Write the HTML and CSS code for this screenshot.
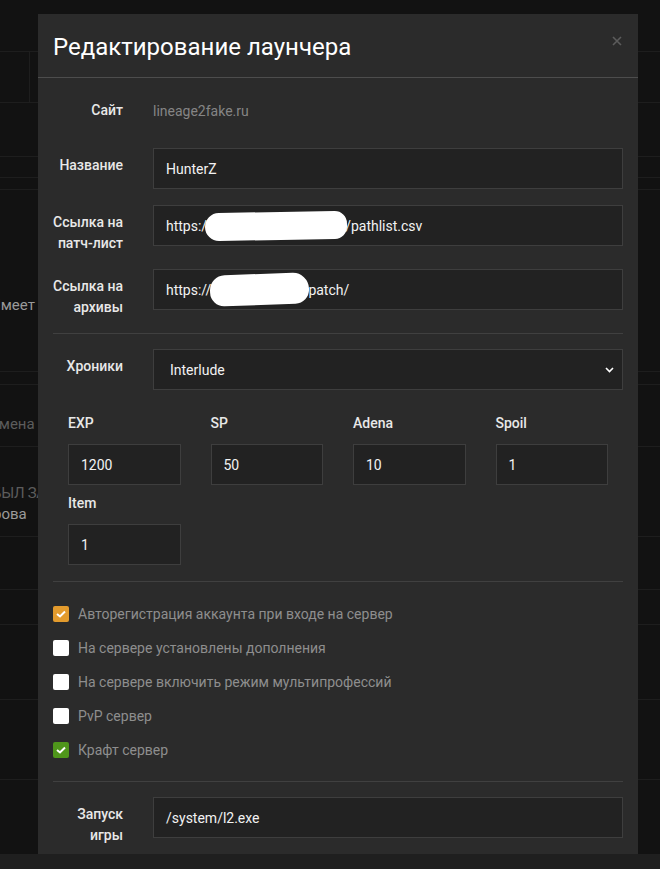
FILE: index.html
```html
<!DOCTYPE html>
<html lang="ru">
<head>
<meta charset="utf-8">
<title>Редактирование лаунчера</title>
<link rel="stylesheet" href="styles.css">
</head>
<body>
<div class="page">
  <div class="prow h52"></div>
  <div class="prow h51"><span class="vsep"></span></div>
  <div class="prow h54"></div>
  <div class="prow h21"></div>
  <div class="prow h12"></div>
  <div class="prow h182"><span class="ptext t1">Имеет</span></div>
  <div class="prow h13"></div>
  <div class="prow h62"><span class="ptext t2">Смена</span></div>
  <div class="prow h90"><span class="ptext t3">БЫЛ ЗА</span><span class="ptext t4">Активирова</span></div>
  <div class="prow h53"></div>
  <div class="prow h35"></div>
  <div class="prow h75"></div>
  <div class="prow h80"></div>
</div>

<div class="overlay">
  <div class="modal">
    <div class="modal-header">
      <h4 class="modal-title">Редактирование лаунчера</h4>
      <span class="close"><svg width="10" height="10" viewBox="0 0 10 10"><path d="M1 1L9 9M9 1L1 9" stroke="#5c5c5c" stroke-width="1.6" fill="none"/></svg></span>
    </div>
    <div class="modal-body">
      <div class="frow static-row">
        <div class="flabel">Сайт</div>
        <div class="static-value">lineage2fake.ru</div>
      </div>
      <div class="frow">
        <div class="flabel">Название</div>
        <div class="finput">HunterZ</div>
      </div>
      <div class="frow tall">
        <div class="flabel">Ссылка на<br>патч-лист</div>
        <div class="finput">https:/<span class="blot blot1"></span>/pathlist.csv</div>
      </div>
      <div class="frow tall">
        <div class="flabel">Ссылка на<br>архивы</div>
        <div class="finput">https://<span class="blot blot2"></span>patch/</div>
      </div>
      <div class="sep"></div>
      <div class="frow select-row">
        <div class="flabel">Хроники</div>
        <div class="finput fselect"><span>Interlude</span>
          <svg class="chev" width="9" height="6" viewBox="0 0 9 6"><path d="M1 1L4.5 4.5L8 1" stroke="#ffffff" stroke-width="1.6" fill="none"/></svg>
        </div>
      </div>
      <div class="rates">
        <div class="rate"><div class="rlabel">EXP</div><div class="finput">1200</div></div>
        <div class="rate"><div class="rlabel">SP</div><div class="finput">50</div></div>
        <div class="rate"><div class="rlabel">Adena</div><div class="finput">10</div></div>
        <div class="rate"><div class="rlabel">Spoil</div><div class="finput">1</div></div>
        <div class="rate"><div class="rlabel">Item</div><div class="finput">1</div></div>
      </div>
      <div class="sep sep-rates"></div>
      <div class="checks">
        <div class="check"><span class="box box-orange"><svg width="10" height="8" viewBox="0 0 10 8"><path d="M1 4L4 6.5L9 1.5" stroke="#fff" stroke-width="2" fill="none"/></svg></span>Авторегистрация аккаунта при входе на сервер</div>
        <div class="check"><span class="box"></span>На сервере установлены дополнения</div>
        <div class="check"><span class="box"></span>На сервере включить режим мультипрофессий</div>
        <div class="check"><span class="box"></span>PvP сервер</div>
        <div class="check"><span class="box box-green"><svg width="10" height="8" viewBox="0 0 10 8"><path d="M1 4L4 6.5L9 1.5" stroke="#fff" stroke-width="2" fill="none"/></svg></span>Крафт сервер</div>
      </div>
      <div class="sep sep-checks"></div>
      <div class="frow tall">
        <div class="flabel">Запуск<br>игры</div>
        <div class="finput">/system/l2.exe</div>
      </div>
    </div>
  </div>
</div>
<div class="bottom-strip"></div>
</body>
</html>
```
FILE: styles.css
```css
* { box-sizing: border-box; margin: 0; padding: 0; }
html, body { height: 100%; }
body {
  background: #121212;
  font-family: Roboto, "Noto Sans", "Liberation Sans", sans-serif;
  font-size: 14px;
  color: #e6e6e6;
  overflow: hidden;
  position: relative;
}

/* background page behind the modal */
.page { width: 660px; }
.prow { border-bottom: 1px solid #1e1e1e; position: relative; overflow: hidden; }
.h52 { height: 52px; }
.h51 { height: 51px; }
.h54 { height: 54px; }
.h21 { height: 21px; }
.h12 { height: 12px; }
.h182 { height: 182px; }
.h13 { height: 13px; }
.h62 { height: 62px; }
.h90 { height: 90px; }
.h53 { height: 53px; }
.h35 { height: 35px; }
.h75 { height: 75px; }
.h80 { height: 80px; }
.vsep { position: absolute; left: 29px; top: 0; bottom: 0; border-left: 1px solid #1e1e1e; }
.ptext { display: block; white-space: nowrap; font-size: 15px; }
.t1 { color: #9a9a9a; margin-left: -10px; padding-top: 106px; }
.t2 { color: #5c5c5c; margin-left: -11px; padding-top: 30px; }
.t3 { color: #5c5c5c; margin-left: -8px; padding-top: 36px; line-height: 20px; letter-spacing: -0.3px; }
.t4 { color: #9a9a9a; margin-left: -58px; line-height: 22px; }

.overlay {
  position: absolute;
  inset: 0;
  padding: 14px 0 0 38px;
}
.modal {
  width: 600px;
  background: #2b2b2b;
  height: 860px;
}
.modal-header {
  display: flex;
  justify-content: space-between;
  align-items: flex-start;
  padding: 16px 15px 13px 15px;
  border-bottom: 1px solid #4d4d4d;
}
.modal-title {
  font-size: 24px;
  font-weight: 400;
  line-height: 34px;
  color: #ffffff;
}
.close { padding-top: 6px; margin-right: 1px; display: flex; }

.modal-body { padding: 15px; }

.frow {
  display: grid;
  grid-template-columns: 100px 1fr;
  align-items: start;
  margin-bottom: 16px;
}
.frow.tall { min-height: 49px; margin-bottom: 15px; }
.static-row { min-height: 34px; margin-bottom: 21px; }
.flabel {
  text-align: right;
  font-weight: 500;
  color: #e8e8e8;
  padding: 7px 30px 0 0;
  line-height: 21px;
  white-space: nowrap;
}
.static-value {
  color: #858585;
  padding-top: 8px;
  line-height: 21px;
}
.finput {
  position: relative;
  height: 41px;
  background: #222222;
  border: 1px solid #3e3e3e;
  padding: 0 12px;
  display: flex;
  align-items: center;
  color: #f2f2f2;
  font-size: 14px;
  white-space: nowrap;
  overflow: hidden;
}
.blot {
  display: inline-block;
  flex: none;
  background: #ffffff;
}
.blot1 { width: 142px; height: 28px; margin: 1px -2px 0 -2px; border-radius: 16px 14px 14px 16px; transform: rotate(-1deg); }
.blot2 { width: 99px; height: 31px; margin: 0 -1px 0 -1px; border-radius: 15px 16px 14px 14px; transform: rotate(-2deg); }

.sep { height: 1px; background: #404040; margin: 8px 0 15px; }
.select-row { margin-bottom: 23px; }
.fselect { justify-content: space-between; padding: 0 8px 0 16px; }
.chev { margin-top: 1px; }

.rates {
  display: grid;
  grid-template-columns: repeat(4, 1fr);
  row-gap: 8px;
}
.rate { padding: 0 15px; }
.rlabel {
  font-weight: 500;
  color: #e8e8e8;
  line-height: 21px;
  margin-bottom: 10px;
}
.sep-rates { margin: 16px 0 22px; }

.check {
  display: flex;
  align-items: center;
  height: 20px;
  margin-bottom: 14px;
  color: #8e8e8e;
  font-size: 14px;
}
.check:last-child { margin-bottom: 0; }
.box {
  width: 16px;
  height: 16px;
  background: #ffffff;
  border-radius: 2px;
  margin-right: 9px;
  display: flex;
  align-items: center;
  justify-content: center;
  flex: none;
}
.box-orange { background: #e39b2d; }
.box-green { background: #4f961b; }
.sep-checks { margin: 21px 0 15px; }

.bottom-strip {
  position: absolute;
  left: 0;
  right: 0;
  bottom: 0;
  height: 15px;
  background: #1f1f1f;
}
```
